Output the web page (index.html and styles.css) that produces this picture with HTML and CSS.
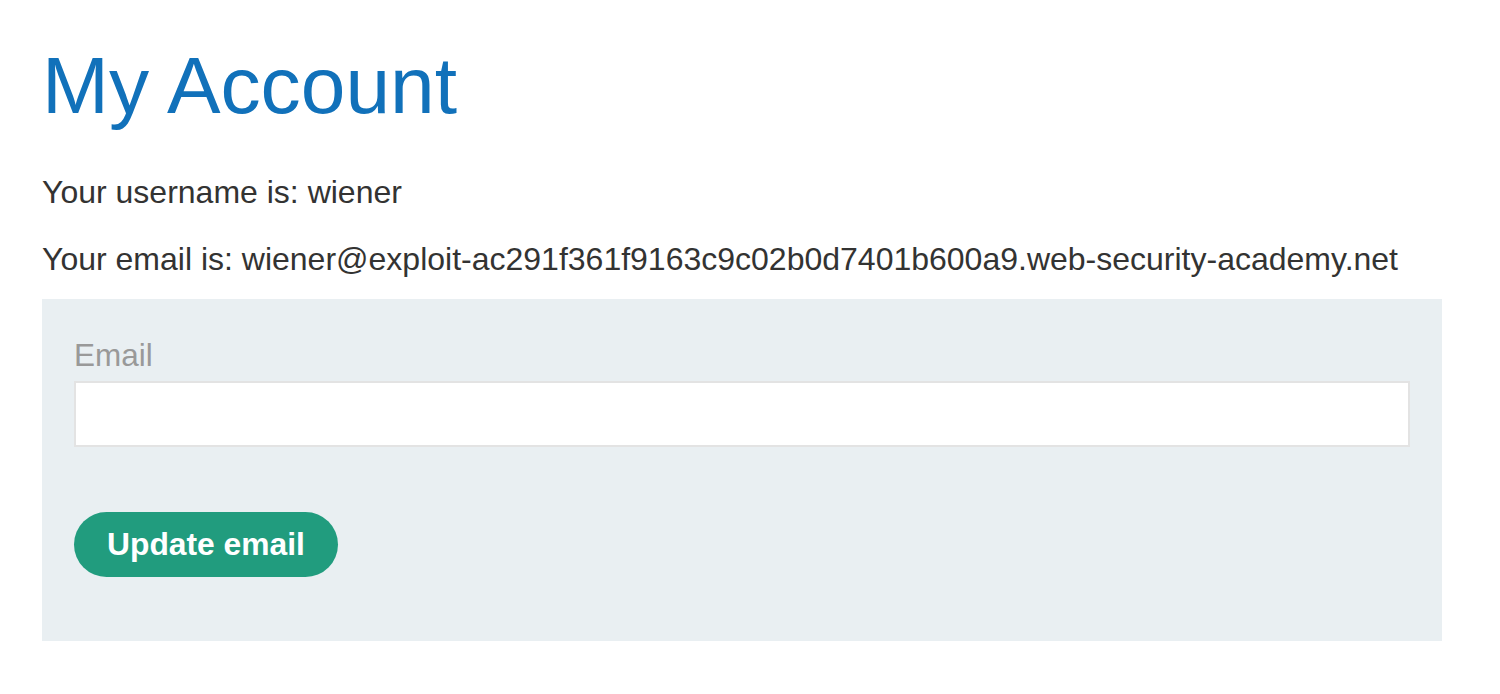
FILE: index.html
```html
<!DOCTYPE html>
<html>
<head>
<meta charset="utf-8">
<link rel="stylesheet" href="styles.css">
</head>
<body>
<div class="page">
  <h1 class="title">My Account</h1>
  <p class="info first">Your username is: wiener</p>
  <p class="info second">Your email is: wiener@exploit-ac291f361f9163c9c02b0d7401b600a9.web-security-academy.net</p>
  <form class="email-form">
    <label class="label" for="email">Email</label>
    <input class="input" id="email" type="email" name="email">
    <button class="button" type="button">Update email</button>
  </form>
</div>
</body>
</html>
```

FILE: styles.css
```css
html, body {
  margin: 0;
  padding: 0;
  background: #ffffff;
}
body {
  font-family: "Liberation Sans", Arial, sans-serif;
  color: #333332;
}
.page {
  padding: 0 58px 0 42px;
}
.title {
  margin: 40px 0 0 0;
  font-size: 80.3px;
  line-height: 91px;
  font-weight: normal;
  color: #1171ba;
}
.info {
  margin: 0;
  font-size: 32px;
  line-height: 44px;
}
.first {
  margin-top: 39px;
}
.second {
  margin-top: 22.5px;
}
.email-form {
  margin-top: 18px;
  background: #e9eff2;
  padding: 34px 32px 64px 32px;
  display: flex;
  flex-direction: column;
  align-items: flex-start;
}
.label {
  font-size: 31.5px;
  line-height: 44px;
  color: #999999;
}
.input {
  margin: 4px 0 0 0;
  box-sizing: border-box;
  width: 100%;
  height: 66px;
  border: 2px solid #e3e3e3;
  background: #ffffff;
  outline: none;
  font-size: 31px;
}
.button {
  margin-top: 65px;
  height: 65px;
  padding: 0 33px;
  border: none;
  border-radius: 33px;
  background: #219c7e;
  color: #ffffff;
  font-family: "Liberation Sans", Arial, sans-serif;
  font-weight: bold;
  font-size: 31.8px;
}
```
